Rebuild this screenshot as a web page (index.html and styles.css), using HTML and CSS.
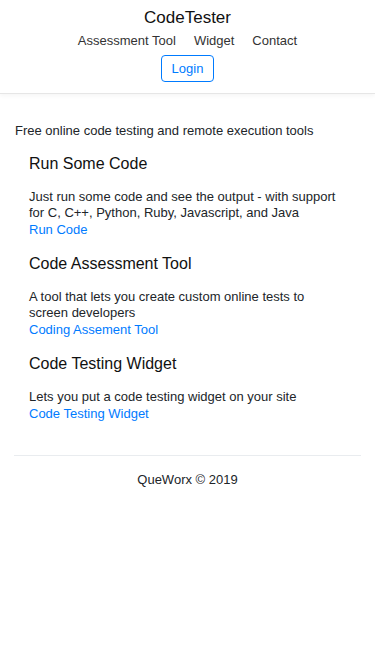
FILE: index.html
```html
<!doctype html>
<html lang="en">
<head>
	<meta charset="UTF-8">
	<title>CodeTester</title>
	<link rel="stylesheet" href="styles.css">
</head>
<body>
	<div class="header">
		<div class="brand">CodeTester</div>
		<div class="nav">
			<a href="#">Assessment Tool</a>
			<a href="#">Widget</a>
			<a href="#">Contact</a>
		</div>
		<button class="login">Login</button>
	</div>
	<div class="main">
		<p class="intro">Free online code testing and remote execution tools</p>
		<div class="section">
			<h2>Run Some Code</h2>
			<p>Just run some code and see the output - with support for C, C++, Python, Ruby, Javascript, and Java</p>
			<a href="#">Run Code</a>
		</div>
		<div class="section">
			<h2>Code Assessment Tool</h2>
			<p>A tool that lets you create custom online tests to screen developers</p>
			<a href="#">Coding Assement Tool</a>
		</div>
		<div class="section">
			<h2>Code Testing Widget</h2>
			<p>Lets you put a code testing widget on your site</p>
			<a href="#">Code Testing Widget</a>
		</div>
		<div class="footer">QueWorx &copy; 2019</div>
	</div>
</body>
</html>
```

FILE: styles.css
```css
*{
	padding:0;
	margin:0;
	box-sizing: border-box;
}
body{
	font:13px/16.5px "Liberation Sans", Arial, sans-serif;
	color:#212529;
	background:#fff;
}
a{
	text-decoration: none;
	color:#007bff;
}
.header{
	display: flex;
	flex-direction: column;
	align-items: center;
	padding:8px 0 11px;
	border-bottom:1px solid #e6e6e6;
	box-shadow: 0 2px 4px rgba(0,0,0,0.04);
}
.brand{
	font-size:17px;
	line-height:20px;
	color:#111;
}
.nav{
	display: flex;
	gap:18px;
	margin-top:3px;
	line-height:20px;
}
.nav a{
	color:#333;
}
.login{
	margin-top:4px;
	width:53px;
	height:27px;
	border:1px solid #007bff;
	border-radius:4px;
	background:#fff;
	color:#007bff;
	font:13px "Liberation Sans", Arial, sans-serif;
}
.main{
	padding:29px 14px 0;
}
.intro{
	padding-left:1px;
	margin-bottom:14px;
}
.section{
	padding:0 22px 0 15px;
	margin-bottom:15px;
}
.section h2{
	font-size:16px;
	line-height:20px;
	font-weight: normal;
	color:#111;
	margin-bottom:15px;
}
.section p{
	line-height:16px;
}
.section a{
	display: block;
	line-height:18px;
}
.footer{
	margin-top:32px;
	border-top:1px solid #e9ecef;
	padding-top:16px;
	text-align: center;
}
```
